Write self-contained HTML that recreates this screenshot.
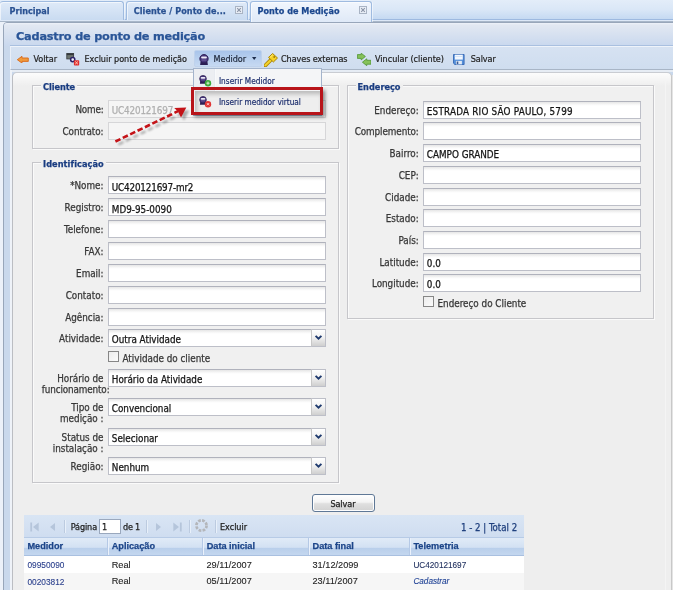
<!DOCTYPE html>
<html><head><meta charset="utf-8"><title>Cadastro de ponto de medição</title>
<style>
html,body{margin:0;padding:0}
html{background:#e6edf7}
body{width:673px;height:590px;overflow:hidden;position:relative;filter:blur(0.55px);-webkit-text-stroke:0.25px currentColor;background:#ecf1f9;font-family:"DejaVu Sans Condensed","Liberation Sans",sans-serif;color:#333}
div,span,svg{position:absolute;box-sizing:border-box;white-space:nowrap}
.t{line-height:1}
#strip{left:0;top:0;width:673px;height:20px;background:linear-gradient(#e3edf9,#dae7f7 50%,#c5d9f2);border-bottom:1px solid #9db9e0}
#strip2{left:0;top:20px;width:673px;height:2px;background:#dde8f7;border-bottom:1px solid #a9b7c9}
.tab{top:1px;height:19px;border:1px solid #9fbbe0;border-bottom:none;border-radius:3px 3px 0 0;background:linear-gradient(#dfeaf8,#c9dbf1);font-weight:bold;font-size:9px;color:#2a5292;box-shadow:inset 1px 1px 0 rgba(255,255,255,.6), 1px 0 0 rgba(255,255,255,.5)}
.tab.act{height:21px;background:linear-gradient(#f1f6fd,#dfe9f7);color:#1b478e}
.tab span{top:5px}
.cls{width:8px;height:8px;top:3.5px;border:1px solid #a9b4c4;background:#e9eef6}
#win{left:3px;top:22px;width:672px;height:570px;background:#c9d8ec;border:1px solid #98a6ba;border-radius:4px 0 0 0}
#hdr{left:4px;top:23px;width:669px;height:23px;border-radius:3px 0 0 0;background:linear-gradient(#eef2f9,#e2e8f2 2px,#c9d8ee);}
#hdr span{left:12px;top:8px;font-family:"DejaVu Sans","Liberation Sans",sans-serif;font-weight:bold;font-size:11.3px;color:#2a5597}
#tb{left:10px;top:46px;width:663px;height:24px;background:linear-gradient(#d6e2f2,#cfddef);border-left:1px solid #e9eff8;border-top:1px solid #eef3fa;border-bottom:1px solid #a8b5c6;font-size:9px;color:#222}
#tb .x{top:7.7px;-webkit-text-stroke:0.2px #222}
#gap{left:10px;top:70px;width:663px;height:2px;background:#e6ecf4}
#bp{left:12px;top:72px;width:660px;height:520px;background:linear-gradient(#fcfcfc,#eeeeee 13px);border:1px solid #c9ccd2;border-right-color:#c8c8c8;border-left-color:#bbbdc2;border-radius:5px 5px 0 0}
.fs{border:1px solid #c6c6ca;box-shadow:inset 1px 1px 0 #fafafa, 1px 1px 0 #fafafa;background:#f0f0f0}
.lg{font-weight:bold;font-size:9.1px;color:#193c80;background:#efefef;padding:0 2px;height:10px}
.lb{font-size:9.8px;color:#383838;text-align:right}
.in{height:18px;border:1px solid #bdbfc8;border-top-color:#b0b2bc;background:linear-gradient(#e6e6e6,#fbfbfb 3px,#fff 4px);font-size:9.8px;color:#151515}
.in span{left:2.8px}
.in.dis{border-color:#d6d6d8;background:#f5f5f5}
.trg{width:15px;height:18px;border:1px solid #bdbfc8;border-left:1px solid #c8c8c8;background:linear-gradient(#ffffff,#f2f2f2 45%,#cfcfcf)}
.cb{width:11px;height:11px;border:1px solid #868686;background:linear-gradient(135deg,#ececec,#fbfbfb)}
.cl{font-size:9.8px;color:#383838}
</style></head>
<body>
<div id="strip"></div><div id="strip2"></div>
<div class="tab" style="left:0;width:123.5px;border-left:none"><span class="t" style="left:9.6px;top:5px;letter-spacing:-0.008px;">Principal</span></div>
<div class="tab" style="left:126px;width:121.5px"><span class="t" style="left:6.7px;top:5px;letter-spacing:0.075px;">Cliente / Ponto de...</span><div class="cls" style="left:108px"><svg width="6" height="6" viewBox="0 0 6 6" style="left:0;top:0"><path d="M1.2 1.2 L4.8 4.8 M4.8 1.2 L1.2 4.8" stroke="#8a94a6" stroke-width="1.1"/></svg></div></div>
<div class="tab act" style="left:249.5px;width:122px"><span class="t" style="left:7px;top:5px;letter-spacing:0.027px;">Ponto de Medição</span><div class="cls" style="left:108px"><svg width="6" height="6" viewBox="0 0 6 6" style="left:0;top:0"><path d="M1.2 1.2 L4.8 4.8 M4.8 1.2 L1.2 4.8" stroke="#8a94a6" stroke-width="1.1"/></svg></div></div>
<div id="win"></div>
<div id="hdr"><span class="t" style="letter-spacing:-0.208px;">Cadastro de ponto de medição</span></div>
<div style="left:10px;top:45px;width:663px;height:1px;background:#a9c0e0"></div>
<div id="tb">
<svg style="left:6px;top:8.5px" width="11.6" height="7.4" viewBox="0 0 11.6 7.4"><path d="M0.3 3.7 L5 0.3 L5 2 L11.3 2 L11.3 5.4 L5 5.4 L5 7.1 Z" fill="#f09a3c" stroke="#d9691a" stroke-width="0.9"/></svg>
<span class="t x" style="left:22.5px;top:7.7px;letter-spacing:-0.000px;">Voltar</span>
<svg style="left:55px;top:6px" width="14" height="13" viewBox="0 0 14 13"><rect x="0.8" y="0.5" width="6.8" height="5.4" fill="#6c746e" stroke="#3c4044" stroke-width="0.9"/><rect x="0.8" y="0.5" width="6.8" height="1.6" fill="#34383c"/><circle cx="6.7" cy="6.6" r="2.1" fill="#f0eef8" stroke="#2c2268" stroke-width="1.5"/><rect x="7.9" y="7.2" width="5.3" height="5.3" rx="0.9" fill="#e02c2c"/><path d="M9.2 8.5 L11.9 11.2 M11.9 8.5 L9.2 11.2" stroke="#ffc4b4" stroke-width="1"/></svg>
<span class="t x" style="left:73.5px;top:7.7px;letter-spacing:-0.020px;">Excluir ponto de medição</span>
<div style="left:183px;top:3px;width:68px;height:17px;border:1px solid #bfd2ec;border-radius:2px;background:linear-gradient(#a8c4ea,#b9d0ee 55%,#c6d9f2)"></div>
<svg style="left:187.5px;top:6.5px" width="10" height="11.2" viewBox="0 0 10 11.2"><path d="M1.6 7.6 L1.1 10.9 H8.9 L8.4 7.6 Z" fill="#2c1e54"/><circle cx="5" cy="4.7" r="4.2" fill="#46367a" stroke="#2c1e54" stroke-width="0.9"/><rect x="2.1" y="2.5" width="5.8" height="2.1" rx="1" fill="#ece8f6"/><rect x="2.6" y="5.6" width="4.8" height="0.9" fill="#7a6aa6"/></svg>
<span class="t x" style="left:202.5px;top:7.7px;letter-spacing:-0.040px;color:#1c2c4c;">Medidor</span>
<svg style="left:241.4px;top:10px" width="4.4" height="3" viewBox="0 0 4.4 3"><path d="M0 0 H4.4 L2.2 3 Z" fill="#1c2c4c"/></svg>
<svg style="left:253px;top:5.5px" width="14" height="14" viewBox="0 0 14 14"><path d="M6.6 7.2 L1.4 12.3" stroke="#a98608" stroke-width="3.8" stroke-linecap="round"/><path d="M6.6 7.2 L1.4 12.3" stroke="#f4d12a" stroke-width="2.2" stroke-linecap="round"/><path d="M8.6 0.5 L13.5 5 L9.4 9 L4.5 4.4 Z" fill="#f6d226" stroke="#a98608" stroke-width="1" stroke-linejoin="round"/><circle cx="10.2" cy="4" r="0.9" fill="#a07c08"/><path d="M6.2 4.2 L8.6 1.9" stroke="#fff3a0" stroke-width="0.9"/></svg>
<span class="t x" style="left:270px;top:7.7px;letter-spacing:-0.071px;">Chaves externas</span>
<svg style="left:345.8px;top:6px" width="14.6" height="13" viewBox="0 0 14.6 13"><path d="M0.4 1.6 H4.2 V0.2 L8.4 3.5 L4.2 6.9 V5.4 H0.4 Z" fill="#86c25a" stroke="#4f9432" stroke-width="0.8" stroke-linejoin="round"/><path d="M14 7.3 H9.8 V5.8 L5.4 9.2 L9.8 12.7 V11.2 H14 Z" fill="#86c25a" stroke="#4f9432" stroke-width="0.8" stroke-linejoin="round"/></svg>
<span class="t x" style="left:364px;top:7.7px;letter-spacing:0.002px;">Vincular (cliente)</span>
<svg style="left:442.4px;top:7px" width="11.6" height="11" viewBox="0 0 11.6 11"><path d="M0.5 0.5 H11.1 V10.5 H1.8 L0.5 9.2 Z" fill="#5590da" stroke="#3468b4" stroke-width="0.9" stroke-linejoin="round"/><rect x="1.8" y="0.7" width="8" height="4.9" fill="#f2f7fe"/><rect x="1.8" y="2.2" width="8" height="0.8" fill="#cfe0f6"/><rect x="2.9" y="6.9" width="6" height="3.5" fill="#e2eaf5"/><rect x="3.7" y="7.5" width="1.6" height="2.6" fill="#3a5a94"/></svg>
<span class="t x" style="left:459.7px;top:7.7px;letter-spacing:-0.072px;">Salvar</span>
</div>
<div id="gap"></div>
<div style="left:10px;top:70px;width:2px;height:520px;background:#eef2f8"></div>
<div id="bp"></div>
<div style="left:672px;top:75px;width:1px;height:515px;background:#e4e4e4"></div>
<div style="left:665px;top:80px;width:1px;height:510px;background:#f4f4f4"></div>
<div class="fs" style="left:32px;top:85px;width:307px;height:64px"></div>
<span class="lg t" style="left:41px;top:84px;width:36px;height:4px;letter-spacing:-0.064px;"><span class="t" style="left:2px;top:-1.2px">Cliente</span></span>
<div class="fs" style="left:32px;top:162px;width:307px;height:321px"></div>
<span class="lg t" style="left:41px;top:161px;width:64.5px;height:4px;letter-spacing:0.084px;"><span class="t" style="left:2px;top:-1.2px">Identificação</span></span>
<div class="fs" style="left:347px;top:85px;width:307px;height:234px"></div>
<span class="lg t" style="left:355.5px;top:84px;width:47px;height:4px;letter-spacing:0.015px;"><span class="t" style="left:2px;top:-1.2px">Endereço</span></span>
<span class="lb t" style="right:569.5px;top:105.21px;letter-spacing:-0.173px;">Nome:</span>
<div class="in dis" style="left:108px;top:100px;width:218px"><span class="t" style="top:5.11px;color:#b0b0b0;letter-spacing:-0.161px;">UC420121697</span></div>
<span class="lb t" style="right:569.5px;top:127.21px;letter-spacing:-0.047px;">Contrato:</span>
<div class="in dis" style="left:108px;top:122px;width:218px"></div>
<span class="lb t" style="right:569.5px;top:181.11px;">*Nome:</span>
<div class="in" style="left:108px;top:176px;width:218px"><span class="t" style="top:5.71px;letter-spacing:-0.171px;">UC420121697-mr2</span></div>
<span class="lb t" style="right:569.5px;top:203.11px;">Registro:</span>
<div class="in" style="left:108px;top:198px;width:218px"><span class="t" style="top:5.71px;">MD9-95-0090</span></div>
<span class="lb t" style="right:569.5px;top:225.11px;">Telefone:</span>
<div class="in" style="left:108px;top:220px;width:218px"></div>
<span class="lb t" style="right:569.5px;top:247.11px;">FAX:</span>
<div class="in" style="left:108px;top:242px;width:218px"></div>
<span class="lb t" style="right:569.5px;top:269.11px;">Email:</span>
<div class="in" style="left:108px;top:264px;width:218px"></div>
<span class="lb t" style="right:569.5px;top:291.11px;">Contato:</span>
<div class="in" style="left:108px;top:286px;width:218px"></div>
<span class="lb t" style="right:569.5px;top:313.11px;">Agência:</span>
<div class="in" style="left:108px;top:308px;width:218px"></div>
<span class="lb t" style="right:569.5px;top:333.71px;">Atividade:</span>
<div class="in" style="left:108px;top:329px;width:204px"><span class="t" style="top:5.11px;">Outra Atividade</span></div>
<div class="trg" style="left:311px;top:329px"><svg width="13" height="16" style="left:0;top:0"><path d="M3.6 5.8 L6.5 8.7 L9.4 5.8" fill="none" stroke="#1f3a6e" stroke-width="1.9"/></svg></div>
<div class="cb" style="left:108px;top:351px"></div><span class="cl t" style="left:122.5px;top:353.6px">Atividade do cliente</span>
<span class="lb t" style="right:569.5px;top:374.01px;">Horário de</span>
<span class="lb t" style="right:563.5px;top:385.11px;letter-spacing:-0.112px;">funcionamento:</span>
<div class="in" style="left:108px;top:369px;width:204px"><span class="t" style="top:5.21px;">Horário da Atividade</span></div>
<div class="trg" style="left:311px;top:369px"><svg width="13" height="16" style="left:0;top:0"><path d="M3.6 5.8 L6.5 8.7 L9.4 5.8" fill="none" stroke="#1f3a6e" stroke-width="1.9"/></svg></div>
<span class="lb t" style="right:569.5px;top:403.01px;">Tipo de</span>
<span class="lb t" style="right:569.5px;top:414.11px;">medição :</span>
<div class="in" style="left:108px;top:398px;width:204px"><span class="t" style="top:5.21px;">Convencional</span></div>
<div class="trg" style="left:311px;top:398px"><svg width="13" height="16" style="left:0;top:0"><path d="M3.6 5.8 L6.5 8.7 L9.4 5.8" fill="none" stroke="#1f3a6e" stroke-width="1.9"/></svg></div>
<span class="lb t" style="right:569.5px;top:433.01px;">Status de</span>
<span class="lb t" style="right:569.5px;top:444.11px;">instalação :</span>
<div class="in" style="left:108px;top:428px;width:204px"><span class="t" style="top:5.21px;">Selecionar</span></div>
<div class="trg" style="left:311px;top:428px"><svg width="13" height="16" style="left:0;top:0"><path d="M3.6 5.8 L6.5 8.7 L9.4 5.8" fill="none" stroke="#1f3a6e" stroke-width="1.9"/></svg></div>
<span class="lb t" style="right:569.5px;top:461.71px;">Região:</span>
<div class="in" style="left:108px;top:457px;width:204px"><span class="t" style="top:5.11px;">Nenhum</span></div>
<div class="trg" style="left:311px;top:457px"><svg width="13" height="16" style="left:0;top:0"><path d="M3.6 5.8 L6.5 8.7 L9.4 5.8" fill="none" stroke="#1f3a6e" stroke-width="1.9"/></svg></div>
<span class="lb t" style="right:254.3px;top:105.71px;letter-spacing:0.032px;">Endereço:</span>
<div class="in" style="left:423px;top:101px;width:218px"><span class="t" style="top:4.71px;letter-spacing:0.213px;">ESTRADA RIO SÃO PAULO, 5799</span></div>
<span class="lb t" style="right:254.3px;top:126.71px;letter-spacing:-0.085px;">Complemento:</span>
<div class="in" style="left:423px;top:122px;width:218px"></div>
<span class="lb t" style="right:254.3px;top:148.71px;">Bairro:</span>
<div class="in" style="left:423px;top:144px;width:218px"><span class="t" style="top:4.71px;">CAMPO GRANDE</span></div>
<span class="lb t" style="right:254.3px;top:170.71px;">CEP:</span>
<div class="in" style="left:423px;top:166px;width:218px"></div>
<span class="lb t" style="right:254.3px;top:192.71px;">Cidade:</span>
<div class="in" style="left:423px;top:188px;width:218px"></div>
<span class="lb t" style="right:254.3px;top:213.71px;">Estado:</span>
<div class="in" style="left:423px;top:209px;width:218px"></div>
<span class="lb t" style="right:254.3px;top:235.71px;">País:</span>
<div class="in" style="left:423px;top:231px;width:218px"></div>
<span class="lb t" style="right:254.3px;top:257.71px;">Latitude:</span>
<div class="in" style="left:423px;top:253px;width:218px"><span class="t" style="top:4.71px;">0.0</span></div>
<span class="lb t" style="right:254.3px;top:278.71px;">Longitude:</span>
<div class="in" style="left:423px;top:274px;width:218px"><span class="t" style="top:4.71px;">0.0</span></div>
<div class="cb" style="left:423px;top:296px"></div><span class="cl t" style="left:437.5px;top:298.6px">Endereço do Cliente</span>
<div style="left:312px;top:494px;width:63px;height:18px;border:1px solid #5f7896;border-radius:3px;background:linear-gradient(#ffffff,#f3f3f3 45%,#dfdfdf 55%,#d2d2d2);box-shadow:inset 0 0 0 1px #fdfdfd"><span class="t" style="left:17.4px;top:4.8px;letter-spacing:-0.072px;font-size:9px;color:#222;">Salvar</span></div>
<div style="left:24px;top:515px;width:500px;height:23px;background:linear-gradient(#d9e5f4,#cfddf0);border-bottom:1px solid #b7cbe6;font-size:9px;color:#222"><div style="left:0;top:1px;width:500px;height:21px">
<svg style="left:6px;top:5.5px" width="9" height="10" viewBox="0 0 9 10"><rect x="0.3" y="0.5" width="1.8" height="9" fill="#b5c5db"/><path d="M8.7 0.5 V9.5 L3 5 Z" fill="#b5c5db"/></svg>
<svg style="left:26px;top:6.5px" width="5" height="8" viewBox="0 0 5 8"><path d="M5 0 V8 L0 4 Z" fill="#b5c5db"/></svg>
<svg style="left:132px;top:6.5px" width="5" height="8" viewBox="0 0 5 8"><path d="M0 0 V8 L5 4 Z" fill="#b5c5db"/></svg>
<svg style="left:148.5px;top:5.5px" width="9" height="10" viewBox="0 0 9 10"><rect x="6.9" y="0.5" width="1.8" height="9" fill="#b5c5db"/><path d="M0.3 0.5 V9.5 L6 5 Z" fill="#b5c5db"/></svg>
<svg style="left:171px;top:3px" width="13" height="13" viewBox="0 0 13 13"><circle cx="6.5" cy="6.5" r="5.1" fill="none" stroke="#b4b6ba" stroke-width="2.7" stroke-dasharray="2.7 1.3"/></svg>
<span class="t" style="left:46.7px;top:7.3px;letter-spacing:-0.104px;">Página</span>
<div style="left:75px;top:2.5px;width:22px;height:15px;border:1px solid #9aa8bd;background:#fff"><span class="t" style="left:2px;top:3px">1</span></div>
<span class="t" style="left:99px;top:7.3px;letter-spacing:-0.212px;">de 1</span>
<span class="t" style="left:196px;top:7.3px;letter-spacing:-0.023px;">Excluir</span>
<span class="t" style="right:6.8px;top:7px;color:#20407e;font-size:9.6px;letter-spacing:0.008px;">1 - 2 | Total 2</span>
<div style="left:39.5px;top:4px;height:13px;background:#bccbe0;border-right:1px solid #e8f0fa;width:2px"></div>
<div style="left:122px;top:4px;height:13px;background:#bccbe0;border-right:1px solid #e8f0fa;width:2px"></div>
<div style="left:164.5px;top:4px;height:13px;background:#bccbe0;border-right:1px solid #e8f0fa;width:2px"></div>
<div style="left:190.5px;top:4px;height:13px;background:#bccbe0;border-right:1px solid #e8f0fa;width:2px"></div>
</div></div>
<div style="left:24px;top:538px;width:500px;height:18px;background:linear-gradient(#e1ebf7,#d3e1f3 55%,#b9cfeb 60%,#c4d7ef);border-bottom:1px solid #a9c0e0;font-family:'Liberation Sans',sans-serif;font-weight:bold;font-size:9.2px;color:#1c4589">
<span class="t" style="left:3.5px;top:4px;letter-spacing:-0.032px;">Medidor</span>
<span class="t" style="left:87.7px;top:4px;letter-spacing:-0.011px;">Aplicação</span>
<span class="t" style="left:182.7px;top:4px;letter-spacing:-0.017px;">Data inicial</span>
<span class="t" style="left:288.5px;top:4px;">Data final</span>
<span class="t" style="left:389.4px;top:4px;letter-spacing:0.002px;">Telemetria</span>
<div style="left:83px;top:0;width:2px;height:17px;background:#b5c9e6;border-right:1px solid #eaf1fb"></div>
<div style="left:177.7px;top:0;width:2px;height:17px;background:#b5c9e6;border-right:1px solid #eaf1fb"></div>
<div style="left:283.5px;top:0;width:2px;height:17px;background:#b5c9e6;border-right:1px solid #eaf1fb"></div>
<div style="left:384.8px;top:0;width:2px;height:17px;background:#b5c9e6;border-right:1px solid #eaf1fb"></div>
</div>
<div style="left:24px;top:556px;width:500px;height:18px;background:#ffffff;border-bottom:1px solid #e8e8e8;font-family:'Liberation Sans',sans-serif;font-size:9.2px;color:#222;-webkit-text-stroke:0.1px currentColor">
<span class="t" style="left:3.5px;top:4.5px;color:#2a3f8c;font-size:8.3px;top:5px;">09950090</span>
<span class="t" style="left:87.7px;top:4.5px;">Real</span>
<span class="t" style="left:182.5px;top:4.5px;">29/11/2007</span>
<span class="t" style="left:288.5px;top:4.5px;">31/12/2099</span>
<span class="t" style="left:389.4px;top:4.5px;top:5.6px;color:#1a2a5a;font-size:8.2px;">UC420121697</span>
</div>
<div style="left:24px;top:572.5px;width:500px;height:18px;background:#f6f6f6;border-bottom:1px solid #e8e8e8;font-family:'Liberation Sans',sans-serif;font-size:9.2px;color:#222;-webkit-text-stroke:0.1px currentColor">
<span class="t" style="left:3.5px;top:4.5px;color:#2a3f8c;font-size:8.3px;top:5px;">00203812</span>
<span class="t" style="left:87.7px;top:4.5px;">Real</span>
<span class="t" style="left:182.5px;top:4.5px;">05/11/2007</span>
<span class="t" style="left:288.5px;top:4.5px;">23/11/2007</span>
<span class="t" style="left:389.4px;top:4.5px;top:5.6px;color:#1a2a5a;font-size:8.2px;font-style:italic;color:#1c3f94;">Cadastrar</span>
</div>
<div style="left:193px;top:68px;width:129px;height:48px;background:linear-gradient(90deg,#eceef2 20px,#dfe3ea 20px,#f8f9fb 21.5px,#f4f5f7 22px);border:1px solid #a4b4cc;font-size:8.2px;color:#17296a;-webkit-text-stroke:0.15px #17296a">
<svg style="left:5.4px;top:6.2px" width="13" height="12" viewBox="0 0 13 12"><g transform="scale(0.8)"><path d="M1.6 7.6 L1.1 10.9 H8.9 L8.4 7.6 Z" fill="#2c1e54"/><circle cx="5" cy="4.7" r="4.2" fill="#46367a" stroke="#2c1e54" stroke-width="0.9"/><rect x="2.1" y="2.5" width="5.8" height="2.1" rx="1" fill="#ece8f6"/><rect x="2.6" y="5.6" width="4.8" height="0.9" fill="#7a6aa6"/></g><circle cx="9" cy="8.2" r="3.2" fill="#3caa3c"/><path d="M7.4 8.2 H10.6 M9 6.6 V9.8" stroke="#d8f4d0" stroke-width="1"/></svg>
<span class="t" style="left:24.9px;top:8px;letter-spacing:0.035px;">Inserir Medidor</span>
<div style="left:0.5px;top:21.5px;width:125px;height:22px;box-shadow:inset 2px 3px 4px rgba(0,0,0,.22);background:#eeeeee"></div>
<svg style="left:5.4px;top:26.7px" width="13" height="12" viewBox="0 0 13 12"><g transform="scale(0.8)"><path d="M1.6 7.6 L1.1 10.9 H8.9 L8.4 7.6 Z" fill="#2c1e54"/><circle cx="5" cy="4.7" r="4.2" fill="#46367a" stroke="#2c1e54" stroke-width="0.9"/><rect x="2.1" y="2.5" width="5.8" height="2.1" rx="1" fill="#ece8f6"/><rect x="2.6" y="5.6" width="4.8" height="0.9" fill="#7a6aa6"/></g><circle cx="9" cy="8.2" r="3.2" fill="#e03434"/><path d="M7.9 7.1 L10.1 9.3 M10.1 7.1 L7.9 9.3" stroke="#ffd6d6" stroke-width="0.9"/></svg>
<span class="t" style="left:24.9px;top:28.5px;letter-spacing:-0.008px;">Inserir medidor virtual</span>
</div>
<div style="left:191px;top:87px;width:131.5px;height:28.3px;border:3.5px solid #b8141a;box-shadow:2.5px 2.5px 3.5px rgba(0,0,0,.42)"></div>
<svg width="673" height="590" style="left:0;top:0;pointer-events:none"><defs><filter id="sh" x="-20%" y="-20%" width="150%" height="150%"><feGaussianBlur stdDeviation="1.2"/></filter></defs><g transform="translate(3,3)" opacity="0.3" filter="url(#sh)"><path d="M115.4 141.5 L178 111.2" stroke="#000" stroke-width="2.3" stroke-dasharray="5.6 2.6" fill="none"/><path d="M186.3 107.6 L174.2 108 L178 111.4 L181 117.6 Z" fill="#000"/></g><path d="M115.4 141.5 L178 111.2" stroke="#c41318" stroke-width="2.6" stroke-dasharray="5.6 2.6" fill="none"/><path d="M186.3 107.6 L174.2 108 L178 111.4 L181 117.6 Z" fill="#c41318"/></svg>
</body></html>
